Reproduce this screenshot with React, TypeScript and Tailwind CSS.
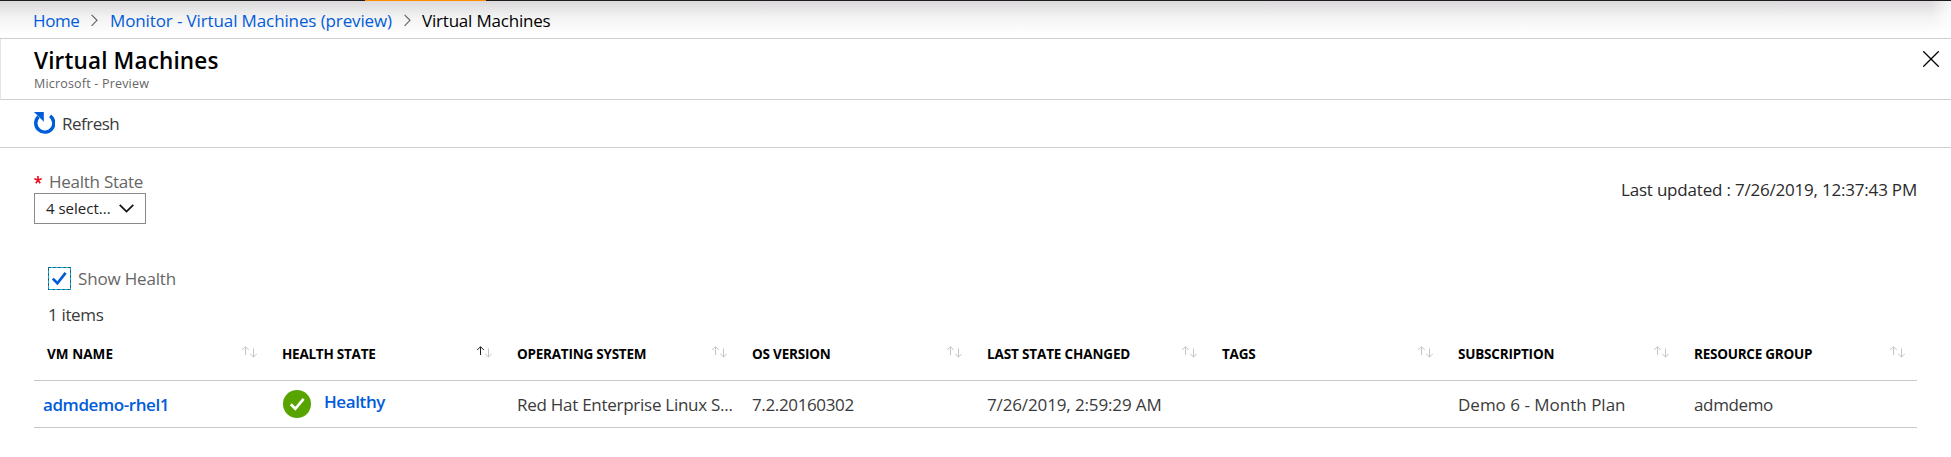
import React from 'react';

type Column = { label: string; tracking: string; sorted?: boolean };

const columns: Column[] = [
  { label: 'VM NAME', tracking: 'tracking-[0.06px]' },
  { label: 'HEALTH STATE', tracking: 'tracking-[-0.24px]', sorted: true },
  { label: 'OPERATING SYSTEM', tracking: 'tracking-[-0.23px]' },
  { label: 'OS VERSION', tracking: 'tracking-[-0.2px]' },
  { label: 'LAST STATE CHANGED', tracking: 'tracking-[-0.14px]' },
  { label: 'TAGS', tracking: 'tracking-[-0.2px]' },
  { label: 'SUBSCRIPTION', tracking: 'tracking-[-0.2px]' },
  { label: 'RESOURCE GROUP', tracking: 'tracking-[-0.24px]' },
];

function BreadcrumbChevron() {
  return (
    <svg width="7" height="13" viewBox="0 0 7 13" fill="none" stroke="#666" strokeWidth="1.2" className="mb-px shrink-0">
      <path d="M0.6 0.8 6 6.3 0.6 11.8" />
    </svg>
  );
}

function SortIcon({ active }: { active?: boolean }) {
  return (
    <svg width="16" height="12" viewBox="0 0 16 12" fill="none" strokeWidth="1" className="shrink-0">
      <path d="M4.5 9V0.8M1.2 4 4.5 0.7 7.8 4" stroke={active ? '#222' : '#c4c4c4'} />
      <path d="M12.5 2.5V11M9.2 7.8 12.5 11.1 15.8 7.8" stroke="#c4c4c4" />
    </svg>
  );
}

export default function App() {
  return (
    <div className="h-[457px] w-full overflow-hidden bg-white font-['Open_Sans','Noto_Sans',sans-serif] text-[17px] leading-6 text-[#3a3a3a]">
      <div className="flex h-px bg-[#1f1a1f]">
        <div className="ml-[365px] h-px w-[121px] bg-[#ff8c00]" />
      </div>
      <nav className="flex h-[38px] items-start border-b border-[#d0d0d0] bg-linear-to-b from-[#dcdadc] via-[#f3f3f3] via-45% to-white to-90%">
        <div className="flex h-full flex-1 items-center pt-0.5 pl-[33px]">
          <a className="w-[58px] tracking-[-0.4px] text-[#015cda]">Home</a>
          <BreadcrumbChevron />
          <a className="ml-3 w-[294px] tracking-[-0.12px] whitespace-nowrap text-[#015cda]">Monitor - Virtual Machines (preview)</a>
          <BreadcrumbChevron />
          <span className="ml-[11px] tracking-[-0.2px] text-black">Virtual Machines</span>
        </div>
        <div className="h-full w-5 bg-linear-to-r from-transparent to-white/80" />
      </nav>

      <header className="flex h-[61px] justify-between border-b border-l border-b-[#d0d0d0] border-l-[#e4e4e4] pt-2 pr-3 pl-[33px]">
        <div>
          <h1 className="text-[22.5px] leading-7 font-semibold tracking-[0.15px] text-black">Virtual Machines</h1>
          <p className="text-[12.5px] leading-[18px] tracking-[0.19px] text-[#666]">Microsoft - Preview</p>
        </div>
        <svg width="16" height="16" viewBox="0 0 16 16" stroke="#000" strokeWidth="1.3" className="mt-1">
          <path d="M0.3 0.3 15.7 15.7M15.7 0.3 0.3 15.7" />
        </svg>
      </header>

      <div className="flex h-12 items-center gap-[7px] border-b border-[#d0d0d0] pl-[34px]">
        <svg width="21" height="22" viewBox="0 0 21 22" fill="none" className="mb-px">
          <path d="M16.1 3.9A9 9 0 1 1 4.4 4.8" stroke="#015cda" strokeWidth="3.4" />
          <path d="M0 0H9.8V9.8Z" fill="#015cda" />
        </svg>
        <span className="tracking-[-0.5px]">Refresh</span>
      </div>

      <section className="flex items-start justify-between px-[34px] pt-6">
        <div>
          <div className="flex h-[21px] items-center gap-[7px]">
            <svg width="8" height="8" viewBox="0 0 8 8" stroke="#e81123" strokeWidth="1.6" className="mb-[5px]">
              <path d="M4 4V0M4 4 0.3 2.8M4 4 7.7 2.8M4 4 1.8 7.2M4 4 6.2 7.2" />
            </svg>
            <span className="pb-0.5 tracking-[-0.26px] text-[#666]">Health State</span>
          </div>
          <button className="flex h-[31px] w-28 items-center justify-between border border-[#8a8a8a] px-[11px] text-[15px] text-[#222]">
            <span className="pb-0.5">4 select...</span>
            <svg width="15" height="9" viewBox="0 0 15 9" fill="none" stroke="#111" strokeWidth="1.7">
              <path d="M0.7 0.8 7.5 7.6 14.3 0.8" />
            </svg>
          </button>
        </div>
        <span className="mt-1.5 tracking-[-0.2px] text-[#2a2a2a]">Last updated : 7/26/2019, 12:37:43 PM</span>
      </section>

      <section className="px-[34px] pt-[43px]">
        <label className="flex h-[23px] items-center gap-[7px] pl-[14px]">
          <svg width="23" height="23" viewBox="0 0 23 23" fill="none">
            <rect x="0.5" y="0.5" width="22" height="22" stroke="#00b4f0" />
            <rect x="0.5" y="0.5" width="22" height="22" stroke="#245" strokeDasharray="2 3" />
            <path d="M4.8 11.6 9.4 16.3 17.6 5.8" stroke="#015cda" strokeWidth="2.7" />
          </svg>
          <span className="tracking-[-0.17px] text-[#666]">Show Health</span>
        </label>
        <p className="mt-[13px] pl-[14px] tracking-[-0.35px]">1 items</p>

        <div className="grid h-[54px] grid-cols-[repeat(5,235px)_repeat(2,236px)_1fr] border-b border-[#c8c8c8]">
          {columns.map((c) => (
            <div key={c.label} className="flex items-center justify-between pr-3 pl-[13px] text-[13.5px] font-bold text-black">
              <span className={c.tracking}>{c.label}</span>
              <span className="mb-1"><SortIcon active={c.sorted} /></span>
            </div>
          ))}
        </div>

        <div className="grid h-[47px] grid-cols-[repeat(5,235px)_repeat(2,236px)_1fr] items-center border-b border-[#c8c8c8] whitespace-nowrap">
          <a className="pt-0.5 pl-[9px] font-semibold tracking-[-0.42px] text-[#015cda]">admdemo-rhel1</a>
          <div className="flex items-center gap-[13px] pl-[14px]">
            <svg width="28" height="28" viewBox="0 0 28 28" fill="none">
              <circle cx="14" cy="14" r="14" fill="#57a300" />
              <path d="M7.8 14.3 12.3 18.8 20.6 8.8" stroke="#fff" strokeWidth="2.7" />
            </svg>
            <a className="pb-1 font-semibold tracking-[-0.4px] text-[#015cda]">Healthy</a>
          </div>
          <span className="pt-0.5 pl-[13px] tracking-[-0.27px]">Red Hat Enterprise Linux S...</span>
          <span className="pt-0.5 pl-[13px] tracking-[-0.36px]">7.2.20160302</span>
          <span className="pt-0.5 pl-[13px] tracking-[-0.13px]">7/26/2019, 2:59:29 AM</span>
          <span />
          <span className="pt-0.5 pl-[13px]">Demo 6 - Month Plan</span>
          <span className="pt-0.5 pl-[13px] tracking-[-0.36px]">admdemo</span>
        </div>
      </section>
    </div>
  );
}
